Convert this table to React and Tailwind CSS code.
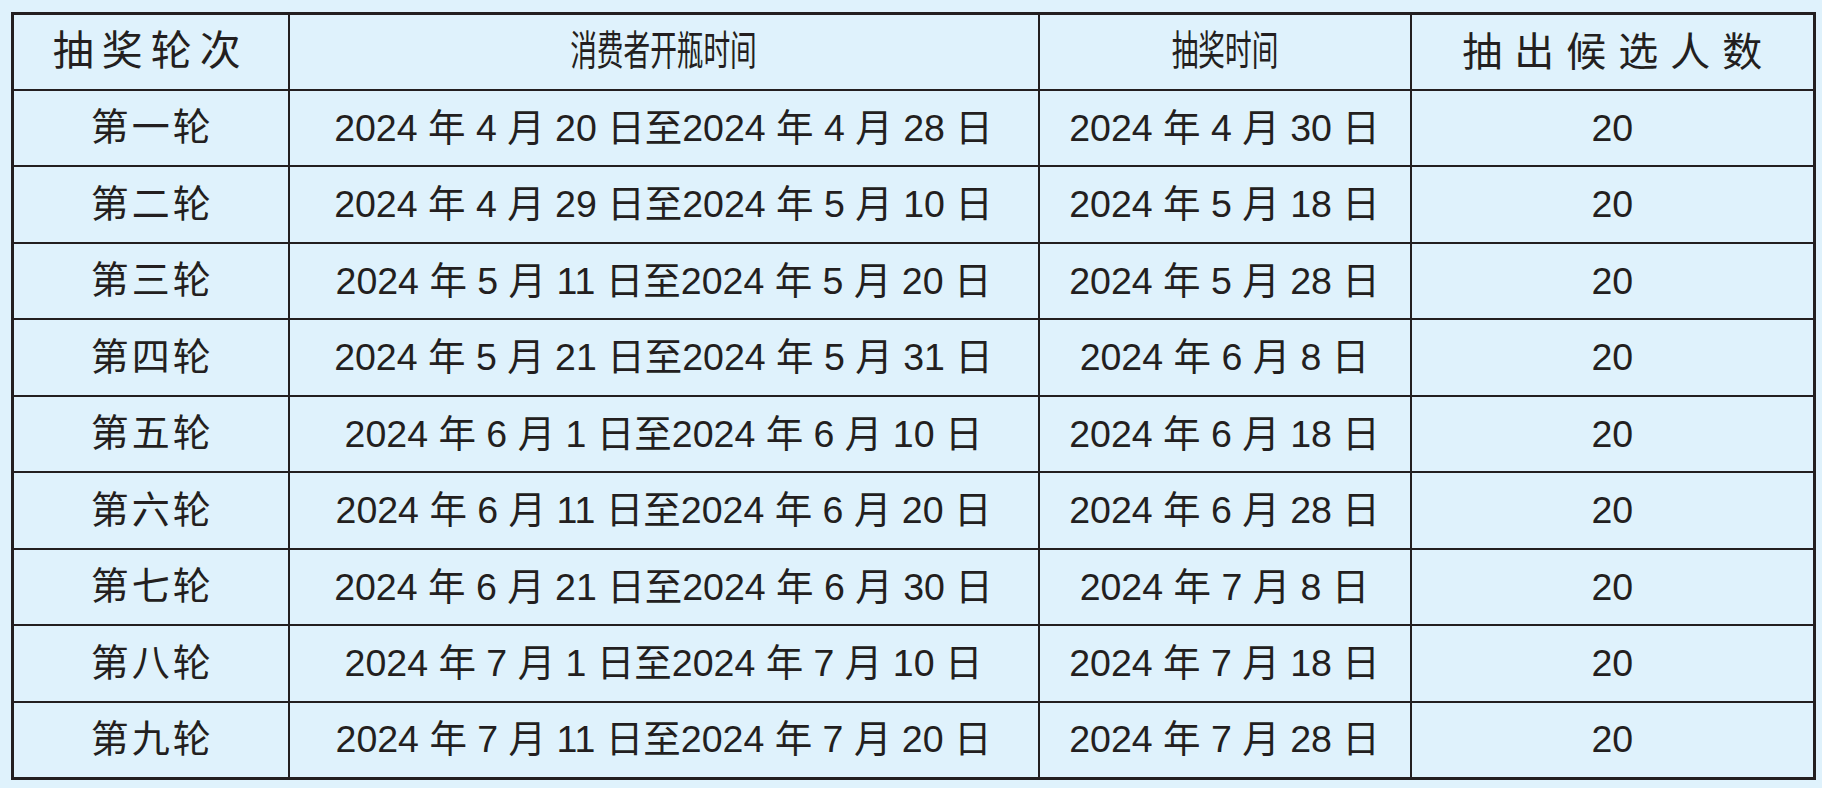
const rows = [
  ["第一轮", "2024 年 4 月 20 日至2024 年 4 月 28 日", "2024 年 4 月 30 日", "20"],
  ["第二轮", "2024 年 4 月 29 日至2024 年 5 月 10 日", "2024 年 5 月 18 日", "20"],
  ["第三轮", "2024 年 5 月 11 日至2024 年 5 月 20 日", "2024 年 5 月 28 日", "20"],
  ["第四轮", "2024 年 5 月 21 日至2024 年 5 月 31 日", "2024 年 6 月 8 日", "20"],
  ["第五轮", "2024 年 6 月 1 日至2024 年 6 月 10 日", "2024 年 6 月 18 日", "20"],
  ["第六轮", "2024 年 6 月 11 日至2024 年 6 月 20 日", "2024 年 6 月 28 日", "20"],
  ["第七轮", "2024 年 6 月 21 日至2024 年 6 月 30 日", "2024 年 7 月 8 日", "20"],
  ["第八轮", "2024 年 7 月 1 日至2024 年 7 月 10 日", "2024 年 7 月 18 日", "20"],
  ["第九轮", "2024 年 7 月 11 日至2024 年 7 月 20 日", "2024 年 7 月 28 日", "20"],
];

const cell = "border-2 border-[#231f20] text-center align-middle p-0";

const App = () => {
  return (
    <div
      className="w-full h-[788px] bg-[#dff2fc] pt-[12px] pl-[11px] text-[#231f20]"
      style={{ fontFamily: '"Liberation Sans", "Noto Sans CJK SC", sans-serif' }}
    >
      <table className="w-[1802px] table-fixed border-collapse border-[3px] border-[#231f20]">
        <colgroup>
          <col className="w-[276px]" />
          <col className="w-[750px]" />
          <col className="w-[372px]" />
          <col className="w-[404px]" />
        </colgroup>
        <thead>
          <tr className="h-[76px]">
            <th className={cell + " font-normal text-[41px] tracking-[8px]"}>抽奖轮次</th>
            <th className={cell + " font-normal"}>
              <span className="inline-block text-[41px] scale-x-[0.65]">消费者开瓶时间</span>
            </th>
            <th className={cell + " font-normal"}>
              <span className="inline-block text-[41px] scale-x-[0.65]">抽奖时间</span>
            </th>
            <th className={cell + " font-normal text-[40px] tracking-[12px] pl-[12px]"}>抽出候选人数</th>
          </tr>
        </thead>
        <tbody>
          {rows.map((r) => (
            <tr className="h-[76.5px]" key={r[0]}>
              <td className={cell + " text-[38px] tracking-[3px] pl-[3px]"}>{r[0]}</td>
              <td className={cell + " text-[37.5px] whitespace-nowrap"}>{r[1]}</td>
              <td className={cell + " text-[37.5px] whitespace-nowrap"}>{r[2]}</td>
              <td className={cell + " text-[37.5px]"}>{r[3]}</td>
            </tr>
          ))}
        </tbody>
      </table>
    </div>
  );
};

export default App;
